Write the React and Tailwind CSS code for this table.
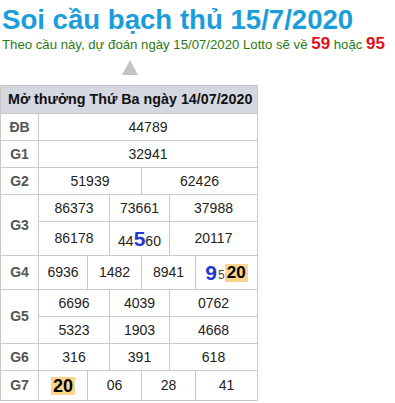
import React from 'react';

const Big = ({ children }) => (
    <span className="text-[21px] font-bold text-[#1d39d6] leading-none">{children}</span>
);

const Hi = ({ children, size = 'text-[17px]' }) => (
    <span className={`inline-block bg-[#fcd48a] font-bold text-black px-[2px] leading-[18px] ${size}`}>{children}</span>
);

const Cell = ({ w, children, last }) => (
    <div className={`${w} flex items-center justify-center ${last ? '' : 'border-r border-[#c9c9c9]'}`}>
        {children}
    </div>
);

const Row = ({ label, children }) => (
    <div className="flex border-b border-[#c9c9c9]">
        <div className="w-[38px] shrink-0 flex items-center justify-center border-r border-[#c9c9c9] font-bold text-[#555] text-[14px]">
            {label}
        </div>
        <div className="flex-1 flex flex-col">{children}</div>
    </div>
);

const Line = ({ h, children, last }) => (
    <div className={`flex ${h} ${last ? '' : 'border-b border-[#c9c9c9]'}`}>{children}</div>
);

export default function App() {
    return (
        <div className="bg-white min-h-screen pl-[2px] pt-[4px] font-['Liberation_Sans',Arial,sans-serif]">
            <h1 className="text-[27.6px] font-bold text-[#1a9ddb] leading-[32px]">Soi cầu bạch thủ 15/7/2020</h1>
            <p className="text-[13.2px] text-[#2b7a12] leading-[18px] mt-[-1px]">
                Theo cầu này, dự đoán ngày 15/07/2020 Lotto sẽ về{' '}
                <span className="text-[17px] font-bold text-[#e3101b]">59</span> hoặc{' '}
                <span className="text-[17px] font-bold text-[#e3101b]">95</span>
            </p>
            <div className="w-[256px] flex justify-center mt-[6px]">
                <svg width="16" height="15" viewBox="0 0 16 15">
                    <polygon points="8,0 16,15 0,15" fill="#c3c3c3" />
                </svg>
            </div>
            <div className="w-[258px] -ml-[2px] mt-[10px] border-l border-t border-r border-[#c9c9c9] text-[14px] text-[#222]">
                <div className="h-[28px] bg-[#d5d8e1] border-b border-[#c9c9c9] flex items-center pl-[7px] font-bold text-[14.3px] text-[#111]">
                    Mở thưởng Thứ Ba ngày 14/07/2020
                </div>
                <Row label="ĐB">
                    <Line h="h-[26px]" last>
                        <Cell w="flex-1" last>44789</Cell>
                    </Line>
                </Row>
                <Row label="G1">
                    <Line h="h-[26px]" last>
                        <Cell w="flex-1" last>32941</Cell>
                    </Line>
                </Row>
                <Row label="G2">
                    <Line h="h-[26px]" last>
                        <Cell w="w-[103px]">51939</Cell>
                        <Cell w="flex-1" last>62426</Cell>
                    </Line>
                </Row>
                <Row label="G3">
                    <Line h="h-[27px]">
                        <Cell w="w-[71px]">86373</Cell>
                        <Cell w="w-[60px]">73661</Cell>
                        <Cell w="flex-1" last>37988</Cell>
                    </Line>
                    <Line h="h-[33px]" last>
                        <Cell w="w-[71px]">86178</Cell>
                        <Cell w="w-[60px]">
                            <span className="mt-[3px]">44<Big>5</Big>60</span>
                        </Cell>
                        <Cell w="flex-1" last>20117</Cell>
                    </Line>
                </Row>
                <Row label="G4">
                    <Line h="h-[33px]" last>
                        <Cell w="w-[49px]">6936</Cell>
                        <Cell w="w-[54px]">1482</Cell>
                        <Cell w="w-[54px]">8941</Cell>
                        <Cell w="flex-1" last>
                            <span className="flex items-center">
                                <Big>9</Big>
                                <span className="text-[12px] text-[#444] ml-[1px] mt-[4px]">5</span>
                                <Hi>20</Hi>
                            </span>
                        </Cell>
                    </Line>
                </Row>
                <Row label="G5">
                    <Line h="h-[27px]">
                        <Cell w="w-[71px]">6696</Cell>
                        <Cell w="w-[60px]">4039</Cell>
                        <Cell w="flex-1" last>0762</Cell>
                    </Line>
                    <Line h="h-[26px]" last>
                        <Cell w="w-[71px]">5323</Cell>
                        <Cell w="w-[60px]">1903</Cell>
                        <Cell w="flex-1" last>4668</Cell>
                    </Line>
                </Row>
                <Row label="G6">
                    <Line h="h-[26px]" last>
                        <Cell w="w-[71px]">316</Cell>
                        <Cell w="w-[60px]">391</Cell>
                        <Cell w="flex-1" last>618</Cell>
                    </Line>
                </Row>
                <Row label="G7">
                    <Line h="h-[29px]" last>
                        <Cell w="w-[49px]">
                            <Hi size="text-[18px]">20</Hi>
                        </Cell>
                        <Cell w="w-[54px]">06</Cell>
                        <Cell w="w-[54px]">28</Cell>
                        <Cell w="flex-1" last>41</Cell>
                    </Line>
                </Row>
            </div>
        </div>
    );
}
